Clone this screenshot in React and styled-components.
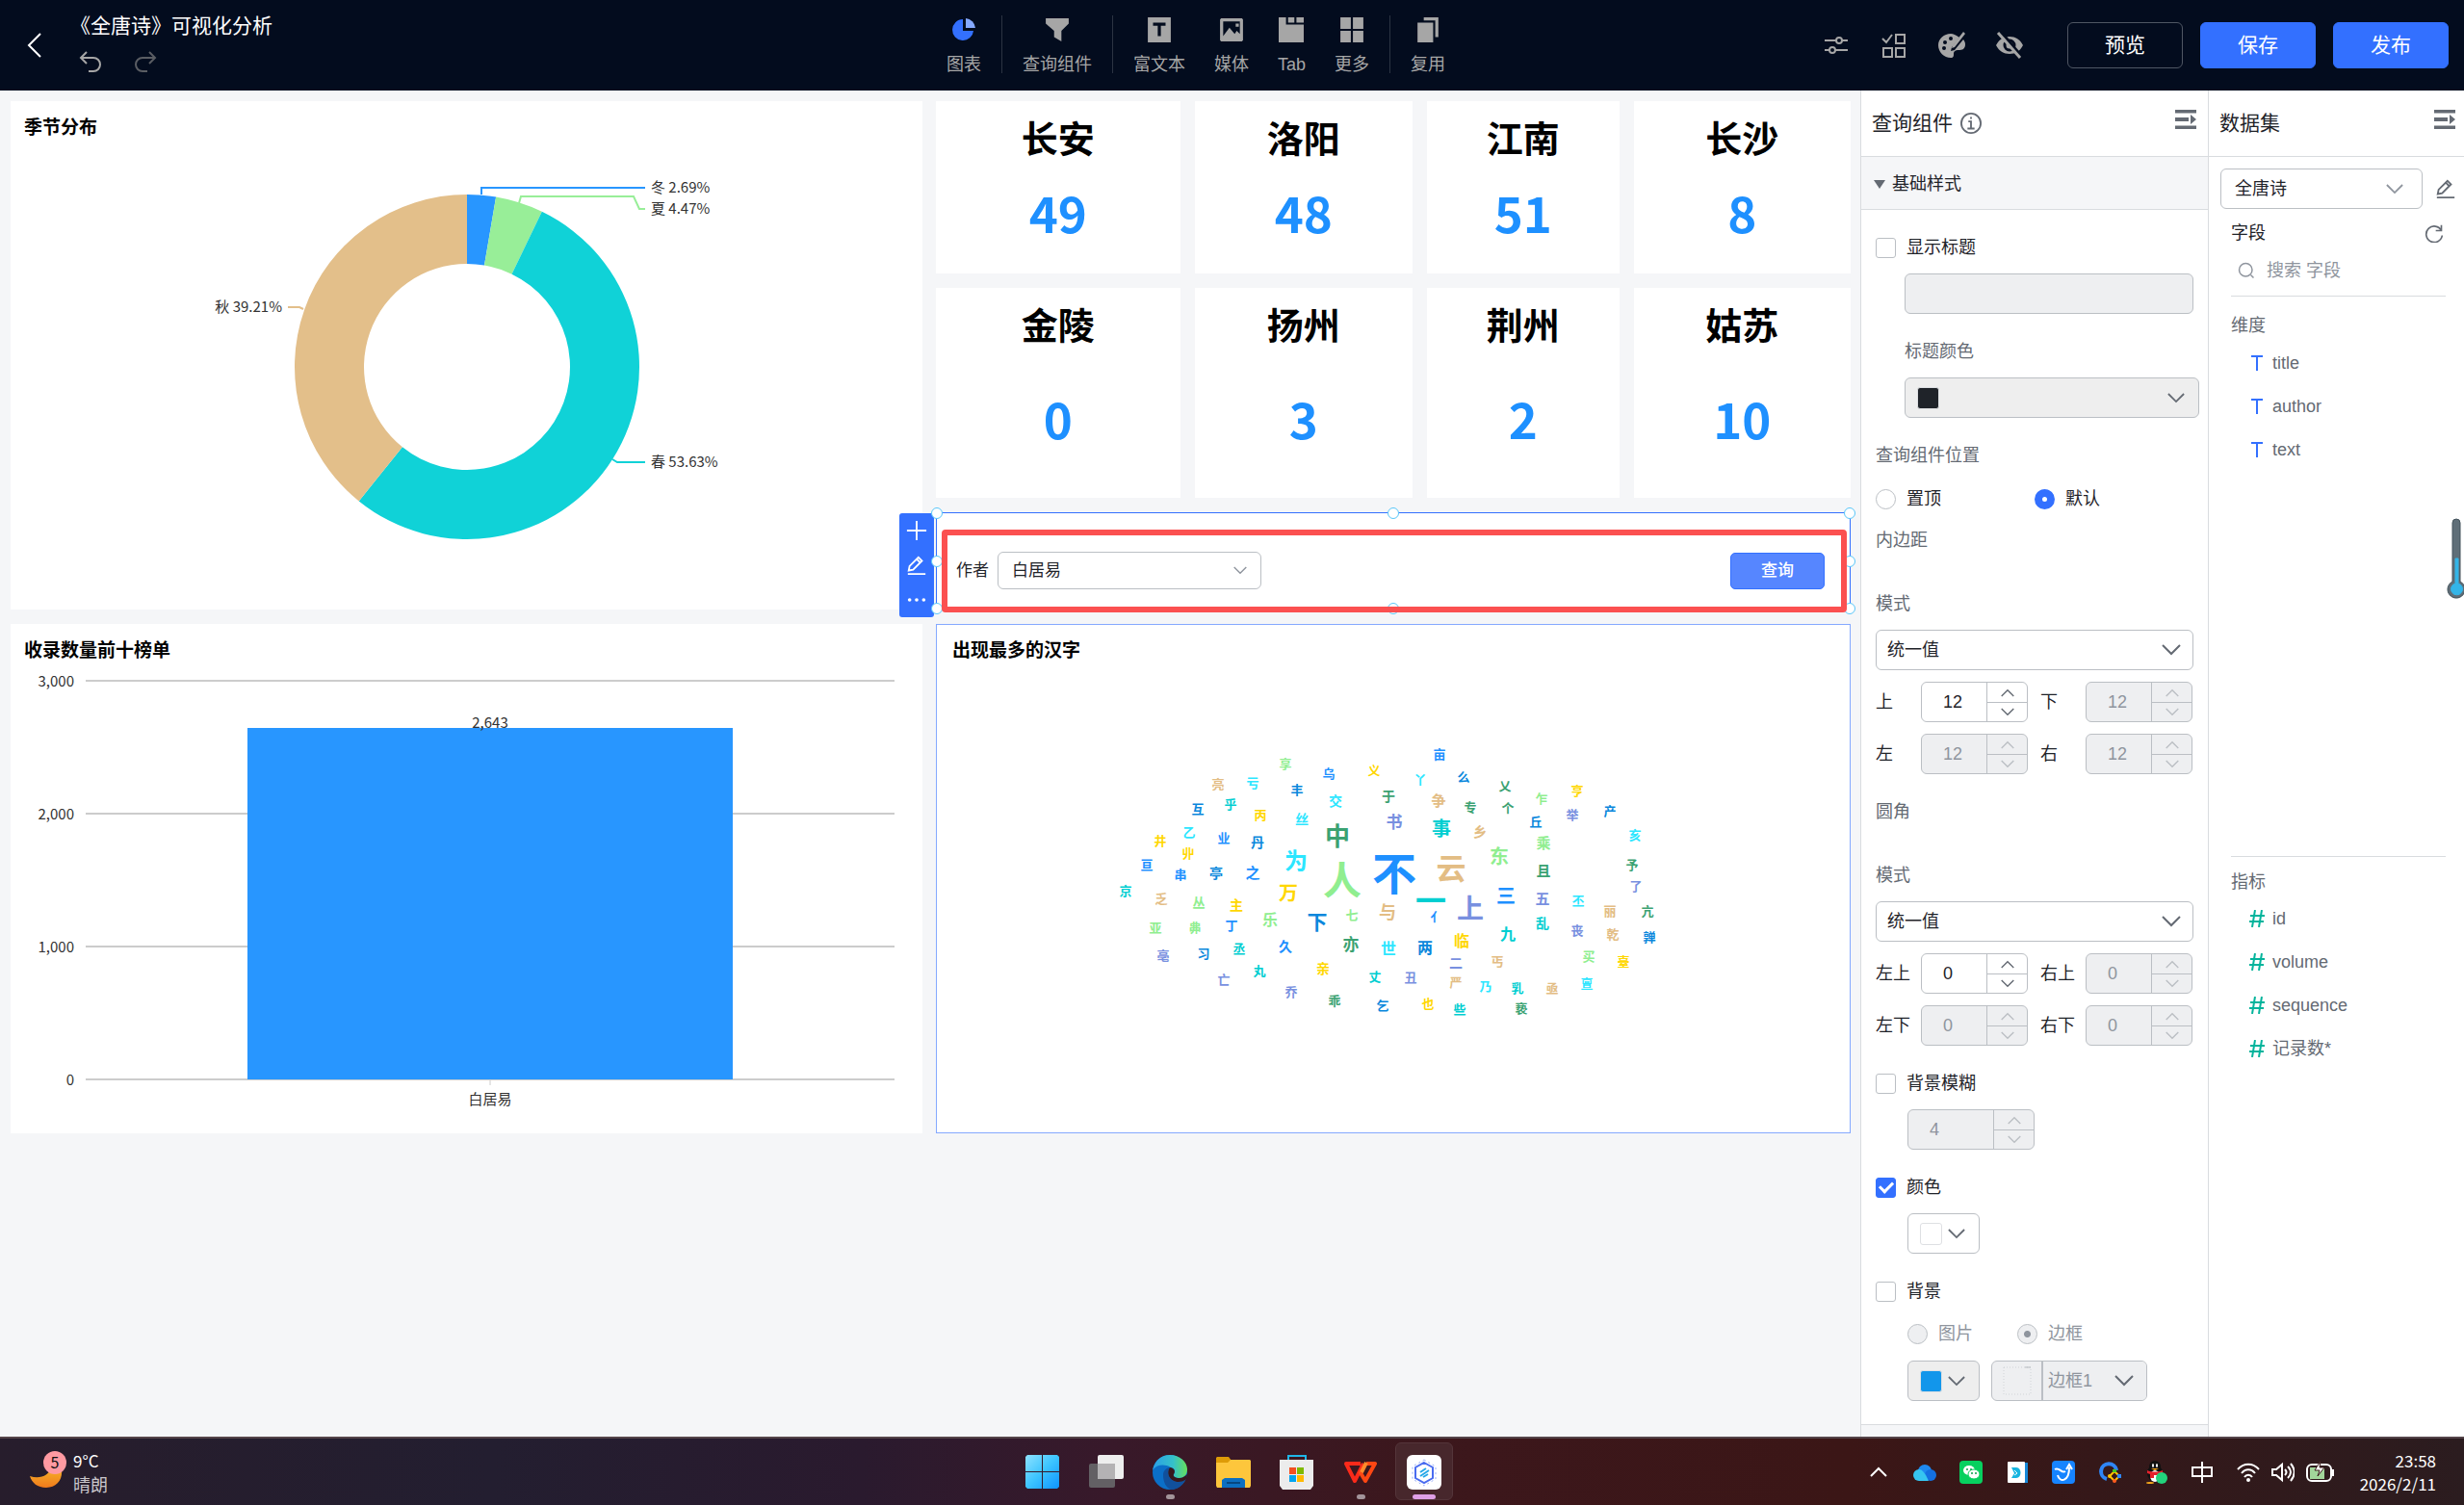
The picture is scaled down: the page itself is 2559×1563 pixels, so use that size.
import React from 'react';
import styled, { createGlobalStyle } from 'styled-components';

const uiFont = '"Liberation Sans", "Noto Sans CJK SC", sans-serif';
const chartFont = '"Noto Sans CJK SC", sans-serif';

const GlobalStyle = createGlobalStyle`
  * {
    box-sizing: border-box;
  }

  body {
    margin: 0;
    font-family: ${uiFont};
    font-size: 18px;
    line-height: 24px;
    color: #1f2329;
    background: #f5f6f8;
  }

  button, input, select {
    font: inherit;
    color: inherit;
    margin: 0;
    padding: 0;
  }

  svg {
    display: block;
    flex: none;
  }
`;

const Page = styled.div`
  display: flex;
  flex-direction: column;
  min-height: 100vh;
`;

/* ---------- top bar ---------- */

const TopBar = styled.header`
  display: grid;
  grid-template-columns: 982fr auto 1057fr;
  height: 94px;
  background: #030c1e;
  color: #a6a6a6;
`;

const TopLeft = styled.div`
  display: flex;
  align-items: center;
  padding-left: 26px;
`;

const PlainButton = styled.button`
  display: flex;
  align-items: center;
  justify-content: center;
  border: 0;
  background: none;
  color: ${props => props.$color || 'inherit'};
`;

const TitleBlock = styled.div`
  padding: 0 0 5px 27px;

  h1 {
    margin: 0;
    font-size: 21px;
    font-weight: 400;
    line-height: 30px;
    color: #fff;
  }
`;

const History = styled.div`
  display: flex;
  gap: 33px;
  padding: 11px 0 0 9px;
`;

const Tools = styled.nav`
  display: flex;
  align-items: center;
  padding-bottom: 2px;
`;

const ToolGroup = styled.div`
  display: flex;
  gap: 30px;

  & + & {
    margin-left: 21px;
    padding-left: 21px;
    border-left: 1px solid #2b3342;
  }
`;

const Tool = styled.button`
  display: flex;
  flex-direction: column;
  align-items: center;
  gap: 11px;
  height: 60px;
  padding-top: 2px;
  border: 0;
  background: none;
`;

const Actions = styled.div`
  display: flex;
  align-items: center;
  justify-content: flex-end;
  gap: 18px;
  padding-right: 16px;
`;

const ActionIcons = styled.div`
  display: flex;
  gap: 30px;
  margin-right: 27px;
`;

const ActionButton = styled.button`
  width: 120px;
  height: 48px;
  border: 1px solid ${props => (props.$primary ? '#3370ff' : '#4f5663')};
  border-radius: 6px;
  background: ${props => (props.$primary ? '#3370ff' : 'transparent')};
  color: #fff;
  font-size: 21px;
`;

/* ---------- canvas ---------- */

const Body = styled.div`
  display: flex;
  flex: 1;
`;

const Canvas = styled.main`
  flex: 1;
  display: grid;
  grid-template-columns: 947fr 950fr;
  grid-template-rows: 528px 529px;
  gap: 15px 14px;
  padding: 11px 10px 11px 11px;
  min-width: 0;
`;

const ChartCard = styled.section`
  display: flex;
  flex-direction: column;
  background: #fff;
  box-shadow: ${props => (props.$active ? 'inset 0 0 0 1px #85a9ff' : 'none')};

  h2 {
    margin: 0;
    padding-left: ${props => (props.$active ? 17 : 14)}px;
    font: 700 19px/52px ${chartFont};
    color: #000;
  }

  svg {
    width: 100%;
    flex: 1;
    overflow: visible;
    font-family: ${chartFont};
  }
`;

const Metrics = styled.div`
  display: grid;
  grid-template-columns: 253fr 226fr 199fr 225fr;
  grid-template-rows: 179px 218px 101px;
  gap: 15px;
`;

const MetricCard = styled.section`
  display: flex;
  flex-direction: column;
  align-items: center;
  background: #fff;
  font-family: ${chartFont};
  font-weight: 700;

  h2 {
    margin: 0;
    padding-top: 11px;
    font-size: 38px;
    line-height: 52px;
    color: #000;
  }

  p {
    display: flex;
    flex: 1;
    align-items: center;
    margin: 0;
    padding-bottom: 12px;
    font-size: 51px;
    color: #1e90ff;
  }
`;

const QueryBox = styled.section`
  position: relative;
  grid-column: 1 / -1;
  display: flex;
  align-items: center;
  justify-content: space-between;
  padding: 20px 26px 0 20px;
  border: 1px solid #3370ff;
  background: #fff;
  font-size: 17px;
`;

const QueryField = styled.label`
  display: flex;
  align-items: center;
  gap: 9px;
`;

const QueryButton = styled.button`
  width: 98px;
  height: 38px;
  border: 1px solid #3370ff;
  border-radius: 5px;
  background: #5686ff;
  color: #fff;
  font-weight: 500;
`;

const SideTools = styled.div`
  position: absolute;
  top: 0;
  left: -39px;
  display: flex;
  flex-direction: column;
  justify-content: space-around;
  align-items: center;
  width: 36px;
  height: 108px;
  border-radius: 3px;
  background: #3370ff;
  color: #fff;
`;

const Handle = styled.i`
  position: absolute;
  left: ${props => props.$x}%;
  top: ${props => props.$y}%;
  width: 12px;
  height: 12px;
  margin: -6px;
  border: 1px solid #59c7f9;
  border-radius: 50%;
  background: #fff;
`;

const RedFrame = styled.div`
  position: absolute;
  inset: 17px 3px -4px 5px;
  border: 6px solid #fb5050;
  border-radius: 4px;
  pointer-events: none;
`;

/* ---------- side panels ---------- */

const Panel = styled.aside`
  position: relative;
  display: flex;
  flex-direction: column;
  flex: none;
  width: ${props => props.$width}px;
  border-left: 1px solid #d9dcdf;
  background: #fff;
`;

const PanelHeader = styled.div`
  display: flex;
  align-items: center;
  gap: 8px;
  height: 69px;
  padding: 0 ${props => props.$right}px 0 11px;
  border-bottom: 1px solid #d9dcdf;
  color: #646a73;

  h2 {
    margin: 0;
    font-size: 21px;
    font-weight: 400;
    color: #1f2329;
  }

  button {
    margin: 0 0 8px auto;
  }
`;

const SectionTitle = styled.button`
  display: flex;
  align-items: center;
  gap: 7px;
  height: 55px;
  padding: 2px 0 0 13px;
  border: 0;
  border-bottom: 1px solid #d9dcdf;
  background: #f5f6f8;
`;

const Form = styled.form`
  display: flex;
  flex-direction: column;
  padding: 0 15px 24px;
  border-bottom: 1px solid #d9dcdf;
`;

const PanelRest = styled.div`
  flex: 1;
  background: #f5f6f8;
`;

const Caption = styled.div`
  margin: ${props => props.$top}px 0 15px ${props => (props.$indent ? 30 : 0)}px;
  color: #646a73;
`;

const Row = styled.div`
  display: flex;
  gap: 12px;
  margin-top: ${props => props.$top || 0}px;
  margin-left: ${props => props.$indent || 0}px;
`;

const Check = styled.label`
  display: flex;
  align-items: center;
  gap: 11px;
  margin: 27px 0 15px;
`;

const Choice = styled.label`
  display: flex;
  align-items: center;
  gap: 11px;
  width: ${props => props.$width}px;
  color: ${props => (props.$muted ? '#8f959e' : '#1f2329')};
`;

const CheckBox = styled.input.attrs({ type: 'checkbox' })`
  appearance: none;
  display: grid;
  place-content: center;
  width: 21px;
  height: 21px;
  border: 1px solid #bbbfc4;
  border-radius: 3px;
  background: #fff;

  &:checked {
    border-color: #3370ff;
    background: #3370ff;
  }

  &:checked::after {
    content: '';
    width: 11px;
    height: 6px;
    margin-bottom: 3px;
    border: solid #fff;
    border-width: 0 0 3px 3px;
    transform: rotate(-45deg);
  }
`;

const Radio = styled.input.attrs({ type: 'radio' })`
  appearance: none;
  width: 21px;
  height: 21px;
  border: 1px solid #bbbfc4;
  border-radius: 50%;
  background: #fff;

  &:checked {
    border: 8px solid #3370ff;
  }

  &:disabled {
    border: 1px solid #bbbfc4;
    background: #eeeff1;
  }

  &:disabled:checked {
    background: radial-gradient(circle, #8f959e 3px, #eeeff1 4px);
  }
`;

const TextBox = styled.input`
  height: 42px;
  margin-left: 30px;
  border: 1px solid #bbbfc4;
  border-radius: 6px;
  background: #eeeff1;
`;

/* the arrow shares the grid cell of the select */
const SelectBox = styled.div`
  display: grid;
  flex: ${props => (props.$width ? 'none' : 1)};
  width: ${props => (props.$width ? `${props.$width}px` : 'auto')};
  align-items: center;

  select, svg {
    grid-area: 1 / 1;
  }

  select {
    appearance: none;
    width: 100%;
    height: ${props => props.$height || 42}px;
    padding-left: ${props => props.$pad || 11}px;
    border: 1px solid #bbbfc4;
    border-radius: 6px;
    background: ${props => (props.$muted ? '#eeeff1' : '#fff')};
    color: ${props => (props.$muted ? '#8f959e' : '#1f2329')};
    opacity: 1;
  }

  svg {
    justify-self: end;
    margin-right: ${props => props.$arrowRight || 13}px;
    pointer-events: none;
    color: ${props => (props.$light ? '#8f959e' : '#646a73')};
  }
`;

const ColorButton = styled.button`
  display: flex;
  align-items: center;
  justify-content: space-between;
  height: 42px;
  width: ${props => (props.$wide ? 306 : 75)}px;
  margin: ${props => (props.$wide ? '0 -6px 0 30px' : '0')};
  padding: 0 14px 0 12px;
  border: 1px solid #bbbfc4;
  border-radius: 6px;
  background: ${props => (props.disabled ? '#eeeeee' : '#fff')};
  color: #646a73;
`;

const Swatch = styled.span`
  width: 23px;
  height: 23px;
  border: 1px solid #dee0e3;
  border-radius: 3px;
  background: ${props => props.$color};
`;

const NumberGrid = styled.div`
  display: grid;
  grid-template-columns: 34px 111px 34px 111px;
  gap: 12px 13px;
  align-items: center;
  margin-top: 12px;

  label {
    white-space: nowrap;
  }
`;

const NumberBox = styled.div`
  display: grid;
  grid-template-columns: 1fr 42px;
  grid-template-rows: 1fr 1fr;
  width: ${props => (props.$wide ? 132 : 111)}px;
  height: 42px;
  border: 1px solid #bbbfc4;
  border-radius: 6px;
  overflow: hidden;
  background: ${props => (props.$muted ? '#eeeff1' : '#fff')};
  color: ${props => (props.$muted ? '#8f959e' : '#1f2329')};

  input {
    grid-row: 1 / 3;
    width: 100%;
    min-width: 0;
    border: 0;
    background: none;
    padding-left: 22px;
    appearance: textfield;
    color: inherit;
  }

  input::-webkit-inner-spin-button {
    display: none;
  }

  button {
    border-left: 1px solid #bbbfc4;
    color: ${props => (props.$muted ? '#bbbfc4' : '#646a73')};
  }

  button + button {
    border-top: 1px solid #bbbfc4;
  }
`;

const BorderPick = styled.div`
  display: flex;
  width: 162px;
  height: 42px;
  border: 1px solid #bbbfc4;
  border-radius: 6px;
  background: #eeeff1;
  overflow: hidden;

  > span {
    display: grid;
    place-items: center;
    width: 53px;
    border-right: 2px solid #bbbfc4;
  }

  select {
    border: 0;
    border-radius: 0;
    height: 40px;
  }
`;

const DatasetRow = styled.div`
  display: flex;
  align-items: center;
  gap: 13px;
  padding: 12px 8px 13px 12px;
  color: #646a73;
`;

const Fields = styled.div`
  display: flex;
  flex-direction: column;
  flex: 1;
  padding: 0 19px 0 23px;
`;

const FieldsHead = styled.div`
  display: flex;
  justify-content: space-between;
  padding-right: 2px;
`;

const Search = styled.label`
  display: flex;
  align-items: center;
  gap: 12px;
  height: 54px;
  padding-left: 7px;
  border-bottom: 1px solid #d9dcdf;
  color: #8f959e;

  input {
    width: 100%;
    min-width: 0;
    border: 0;
    outline: 0;
  }

  input::placeholder {
    color: #8f959e;
  }
`;

const FieldSection = styled.section`
  flex: ${props => props.$grow} 1 0;
  padding-top: ${props => (props.$line ? 14 : 18)}px;
  border-top: ${props => (props.$line ? '1px solid #d9dcdf' : '0')};
  color: #646a73;

  h3 {
    margin: 0;
    font-size: 18px;
    font-weight: 400;
  }

  ul {
    margin: 4px 0 0;
    padding: 0 0 0 19px;
    list-style: none;
  }

  li {
    display: flex;
    align-items: center;
    gap: 8px;
    height: 45px;
  }
`;

const Thermometer = styled.svg`
  position: absolute;
  right: -2px;
  top: 444px;
`;

/* ---------- taskbar ---------- */

const TaskBar = styled.footer`
  display: grid;
  grid-template-columns: 1fr auto 1fr;
  height: 71px;
  border-top: 2px solid #544449;
  background: linear-gradient(90deg, #271d2c 0, #231e30 20%, #2a1a2e 35%, #38192a 45%, #3c171c 58%, #3b1616 75%, #351819 85%, #2b1c1f 100%);
  color: #fff;
  font: 17px/24px ${chartFont};
`;

const Weather = styled.div`
  display: flex;
  align-items: center;
  gap: 6px;
  padding-left: 28px;

  small {
    display: block;
    font-size: 18px;
    color: #c9c6cb;
  }
`;

const Apps = styled.div`
  display: flex;
  gap: 6px;
  padding: 4px 0 5px 3px;
`;

const AppButton = styled.button`
  display: flex;
  flex-direction: column;
  align-items: center;
  justify-content: space-between;
  width: 60px;
  height: 60px;
  padding: 12px 0 0;
  border: 1px solid ${props => (props.$active ? '#54353a' : 'transparent')};
  border-radius: 6px;
  background: ${props => (props.$active ? '#47272c' : 'none')};

  &::after {
    content: '';
    width: ${props => (props.$active ? 24 : 9)}px;
    height: 5px;
    border-radius: 3px;
    background: ${props => (props.$active ? '#df9fe6' : props.$open ? '#a3949a' : 'transparent')};
  }
`;

const Tray = styled.div`
  display: flex;
  align-items: center;
  justify-content: flex-end;
  gap: 24px;
  padding-right: 29px;
`;

const TraySystem = styled.div`
  display: flex;
  align-items: center;
  gap: 12px;
`;

const Clock = styled.time`
  width: 81px;
  text-align: right;
  white-space: nowrap;
`;

/* ---------- icons ---------- */

const Icon = ({ size = 24, h, box = '0 0 24 24', children, fill = 'none', w = 2 }) => (
  <svg width={size} height={h || size} viewBox={box} fill={fill} stroke={fill === 'none' ? 'currentColor' : 'none'} strokeWidth={w} aria-hidden="true">
    {children}
  </svg>
);

const Arrow = ({ size = 20, up }) => (
  <svg width={size} height={size / 2 + 2} viewBox="0 0 20 12" fill="none" stroke="currentColor" strokeWidth="2" aria-hidden="true">
    <path d={up ? 'M1 11l9-9 9 9' : 'M1 1l9 9 9-9'} />
  </svg>
);

const PenIcon = ({ size = 22 }) => (
  <Icon size={size}>
    <path d="M3 18l1-5L14 3l4 4L8 17zM12 5l4 4M2 22h20" />
  </Icon>
);

const FoldIcon = () => (
  <Icon fill="currentColor">
    <path d="M1 2h22v3.500H1zM1 10h14v4H1zM17 7l6 5-6 5zM1 18.500h22V22H1z" />
  </Icon>
);

const toolGroups = [
  [
    { label: '图表', icon: <svg width="26" height="26" viewBox="0 0 26 26"><path d="M12 2a11 11 0 1 0 11 12H12z" fill="#3370ff" /><path d="M15 1v10h10A11 11 0 0 0 15 1z" fill="#85a9ff" /></svg> }
  ],
  [
    { label: '查询组件', icon: <Icon size={26} fill="currentColor"><path d="M1 1h22v5l-7 7v10l-7-4v-6L1 6z" /></Icon> }
  ],
  [
    { label: '富文本', icon: <Icon size={26} fill="currentColor"><path fillRule="evenodd" d="M1 0h22v24H1zM6 5v3h4.500v10h3V8H18V5z" /></Icon> },
    { label: '媒体', icon: <Icon size={26} fill="currentColor"><path fillRule="evenodd" d="M2 1h20l1 1v20l-1 1H2l-1-1V2zM4 4v14l6-8 5 6 2-3 3 3V4zM16 6h3v3h-3z" /></Icon> },
    { label: 'Tab', icon: <Icon size={26} fill="currentColor"><path d="M0 0h7v7h17v17H0zM9 0h6v5H9zM17 0h7v5h-7z" /></Icon> },
    { label: '更多', icon: <Icon size={26} fill="currentColor"><path d="M1 0h10v11H1zM13 0h10v11H13zM1 13h10v11H1zM13 13h10v11H13z" /></Icon> }
  ],
  [
    { label: '复用', icon: <Icon size={26} fill="currentColor"><path d="M2 5h15v19H2zM8 0h14v19h-3V3H8z" /></Icon> }
  ]
];

/* ---------- charts ---------- */

const seasons = [
  { name: '冬', value: 2.69, color: '#2896ff', line: '489,45 489,38 659,38', x: 665, y: 38 },
  { name: '夏', value: 4.47, color: '#98ee98', line: '528,54 530,47 647,47 653,60 659,60', x: 665, y: 60 },
  { name: '春', value: 53.63, color: '#10d2d7', line: '625,320 630,323 659,323', x: 665, y: 323 },
  { name: '秋', value: 39.21, color: '#e3bf8a', line: '304,164 300,162 288,162', x: 282, y: 162, end: true }
];

const slice = (from, to) => {
  const at = (r, share) => {
    const a = (share / 100) * 2 * Math.PI;
    return `${474 + r * Math.sin(a)} ${224 - r * Math.cos(a)}`;
  };
  const big = to - from > 50 ? 1 : 0;
  return `M${at(179, from)}A179 179 0 ${big} 1 ${at(179, to)}L${at(107, to)}A107 107 0 ${big} 0 ${at(107, from)}Z`;
};

const SeasonChart = () => {
  let total = 0;
  return (
    <svg viewBox="0 0 947 476" fontSize="15" fill="#333">
      {seasons.map(s => {
        const from = total;
        total += s.value;
        return (
          <g key={s.name}>
            <path d={slice(from, total)} fill={s.color} />
            <polyline points={s.line} fill="none" stroke={s.color} strokeWidth="2" />
            <text x={s.x} y={s.y + 5} textAnchor={s.end ? 'end' : 'start'}>{`${s.name} ${s.value}%`}</text>
          </g>
        );
      })}
    </svg>
  );
};

const RankChart = () => (
  <svg viewBox="0 0 947 477" fontSize="15" fill="#333">
    {['3,000', '2,000', '1,000', '0'].map((tick, i) => (
      <g key={tick}>
        <path d={`M78 ${7 + i * 138}h840`} stroke="#ccc" strokeWidth="2" />
        <text x="66" y={13 + i * 138} textAnchor="end">{tick}</text>
      </g>
    ))}
    <rect x="246" y="56" width="504" height="365" fill="#2896ff" />
    <path d="M498 421v6" stroke="#ccc" />
    <text x="498" y="56" textAnchor="middle">2,643</text>
    <text x="498" y="447" textAnchor="middle">白居易</text>
  </svg>
);

const hues = {
  b: '#1e90ff', d: '#0a87dc', c: '#2ce6ff', t: '#00ced1', g: '#3ba272',
  l: '#90ee90', y: '#ffd700', n: '#e3bd84', p: '#7890e0'
};

// word, centre x, centre y, hue, size
const words = [
  ['不', 461, 217, 'b', 46], ['人', 407, 224, 'l', 40], ['一', 499, 245, 't', 32], ['云', 520, 211, 'n', 31],
  ['上', 540, 253, 'p', 28], ['中', 402, 178, 'g', 26], ['为', 359, 204, 'c', 24], ['下', 381, 267, 'd', 21],
  ['事', 510, 170, 't', 20], ['东', 570, 199, 'l', 20], ['三', 577, 240, 'b', 20], ['万', 351, 237, 'y', 20],
  ['与', 454, 257, 'n', 18], ['书', 461, 164, 'p', 17], ['亦', 416, 291, 'g', 17], ['乐', 332, 265, 'l', 16],
  ['九', 579, 280, 't', 16], ['世', 455, 295, 'c', 16], ['两', 493, 294, 'd', 16], ['临', 531, 287, 'y', 16],
  ['之', 314, 216, 'b', 15], ['争', 507, 141, 'n', 15], ['五', 615, 243, 'p', 15], ['且', 616, 214, 'g', 15],
  ['乘', 616, 185, 'l', 15], ['于', 455, 137, 'g', 14], ['交', 400, 142, 'c', 14], ['丝', 365, 161, 'c', 14],
  ['乡', 550, 174, 'n', 14], ['丹', 319, 185, 'd', 14], ['亭', 276, 217, 'd', 14], ['主', 297, 250, 'y', 14],
  ['久', 348, 293, 'b', 14], ['亲', 387, 316, 'y', 14], ['二', 525, 310, 'p', 14], ['乱', 615, 269, 't', 14],
  ['享', 348, 103, 'l'], ['乌', 393, 113, 'b'], ['义', 440, 110, 'y'], ['亮', 278, 124, 'n'],
  ['亏', 314, 123, 'c'], ['丰', 360, 130, 'd'], ['互', 257, 150, 'd'], ['乎', 291, 145, 't'],
  ['丙', 322, 156, 'y'], ['乙', 248, 174, 'c'], ['井', 218, 183, 'y'], ['业', 284, 180, 'b'],
  ['丱', 247, 196, 'y'], ['亘', 204, 208, 'b'], ['串', 239, 218, 'b'], ['京', 182, 235, 't'],
  ['乏', 219, 243, 'n'], ['丛', 258, 247, 'l'], ['亚', 213, 273, 'l'], ['丳', 254, 273, 'l'],
  ['丁', 292, 271, 'b'], ['七', 417, 260, 'l'], ['亳', 221, 302, 'p'], ['习', 263, 300, 'd'],
  ['丞', 300, 295, 't'], ['亡', 284, 327, 'p'], ['丸', 321, 318, 't'], ['乔', 354, 340, 'p'],
  ['乖', 399, 349, 'g'], ['亩', 508, 93, 'b'], ['丫', 488, 119, 'c'], ['么', 533, 117, 'd'],
  ['乂', 576, 126, 'g'], ['专', 540, 148, 'g'], ['个', 579, 149, 'g'], ['乍', 614, 139, 'l'],
  ['亨', 651, 131, 'y'], ['丘', 608, 163, 'd'], ['举', 646, 156, 'p'], ['产', 685, 152, 'd'],
  ['亥', 711, 177, 'c'], ['予', 708, 208, 'g'], ['了', 712, 230, 'p'], ['亻', 505, 262, 'b'],
  ['丕', 652, 245, 'c'], ['丽', 685, 256, 'n'], ['亢', 724, 256, 'g'], ['丧', 651, 276, 'p'],
  ['乾', 688, 280, 'n'], ['亸', 726, 283, 'd'], ['丐', 568, 308, 'n'], ['买', 663, 303, 'l'],
  ['臺', 699, 308, 'y'], ['丈', 441, 324, 't'], ['丑', 478, 325, 'p'], ['严', 525, 330, 'n'],
  ['乃', 556, 334, 'c'], ['乳', 589, 336, 't'], ['亟', 625, 336, 'n'], ['亶', 661, 331, 'c'],
  ['乞', 449, 354, 'd'], ['也', 496, 352, 'y'], ['些', 529, 358, 't'], ['亵', 593, 357, 'g']
];

const WordCloud = () => (
  <svg viewBox="-15 10 950 477" fontWeight="700" textAnchor="middle">
    {words.map(([word, x, y, hue, size = 13]) => (
      <text key={word} x={x} y={y + Math.round(size * 0.38)} fontSize={size} fill={hues[hue]}>{word}</text>
    ))}
  </svg>
);

const metrics = [
  ['长安', 49], ['洛阳', 48], ['江南', 51], ['长沙', 8],
  ['金陵', 0], ['扬州', 3], ['荆州', 2], ['姑苏', 10]
];

const handles = [[0, 0], [50, 0], [100, 0], [0, 50], [100, 50], [0, 100], [50, 100], [100, 100]];

/* ---------- parts ---------- */

const Header = () => (
  <TopBar>
    <TopLeft>
      <PlainButton $color="#fff" aria-label="返回">
        <Icon size={20} h={26} box="0 0 20 26"><path d="M16 1L4 13l12 12" /></Icon>
      </PlainButton>
      <TitleBlock>
        <h1>《全唐诗》可视化分析</h1>
        <History>
          <PlainButton aria-label="撤销"><Icon><path d="M8 1L2 7l6 6M2 7h13a7 7 0 0 1 0 14h-5" /></Icon></PlainButton>
          <PlainButton $color="#5a5d63" aria-label="重做"><Icon><path d="M16 1l6 6-6 6M22 7H9a7 7 0 0 0 0 14h5" /></Icon></PlainButton>
        </History>
      </TitleBlock>
    </TopLeft>
    <Tools>
      {toolGroups.map(group => (
        <ToolGroup key={group[0].label}>
          {group.map(tool => (
            <Tool key={tool.label}>{tool.icon}{tool.label}</Tool>
          ))}
        </ToolGroup>
      ))}
    </Tools>
    <Actions>
      <ActionIcons>
        <PlainButton aria-label="参数">
          <Icon size={30} box="0 0 30 30"><path d="M3 10h12M21 10h6M3 20h5M14 20h13" /><circle cx="18" cy="10" r="3" /><circle cx="11" cy="20" r="3" /></Icon>
        </PlainButton>
        <PlainButton aria-label="批量">
          <Icon size={30} box="0 0 30 30"><path d="M3 8l4 4 6-8M17 4h9v9h-9zM4 18h9v9H4zM17 18h9v9h-9z" /></Icon>
        </PlainButton>
        <PlainButton aria-label="外观">
          <Icon size={30} box="0 0 30 30" fill="currentColor">
            <path d="M14 3C7 3 1 8 1 15s6 13 13 13c3 0 3-2 3-4 0-3 2-4 5-4 4 0 7-1 7-6 0-2-1-4-2-5l-9 11-4 1 1-4 8-10c-3-2-6-4-9-4z" />
            <path d="M27 1l2 2-11 14-3 1 1-3z" />
            <g fill="#030c1e"><circle cx="7" cy="18" r="2" /><circle cx="8" cy="12" r="2" /><circle cx="14" cy="8" r="2" /></g>
          </Icon>
        </PlainButton>
        <PlainButton aria-label="隐藏">
          <Icon size={30} box="0 0 30 30">
            <path d="M1 15c3-6 8-9 14-9s11 3 14 9c-3 6-8 9-14 9S4 21 1 15z" fill="currentColor" stroke="none" />
            <circle cx="15" cy="15" r="5" stroke="#030c1e" strokeWidth="3" />
            <path d="M6 1l22 26" stroke="#030c1e" strokeWidth="3" />
            <path d="M3 2l23 26" strokeWidth="3" />
          </Icon>
        </PlainButton>
      </ActionIcons>
      <ActionButton>预览</ActionButton>
      <ActionButton $primary>保存</ActionButton>
      <ActionButton $primary>发布</ActionButton>
    </Actions>
  </TopBar>
);

const Query = () => (
  <QueryBox>
    <QueryField>
      作者
      <SelectBox $width={274} $height={39} $pad={14} $arrowRight={15} $light>
        <select defaultValue="白居易"><option>白居易</option></select>
        <Arrow size={14} />
      </SelectBox>
    </QueryField>
    <QueryButton>查询</QueryButton>
    <SideTools>
      <PlainButton aria-label="添加"><Icon size={22}><path d="M12 1v22M1 12h22" /></Icon></PlainButton>
      <PlainButton aria-label="编辑"><PenIcon /></PlainButton>
      <PlainButton aria-label="更多操作"><Icon size={22} fill="currentColor"><circle cx="4" cy="12" r="2" /><circle cx="12" cy="12" r="2" /><circle cx="20" cy="12" r="2" /></Icon></PlainButton>
    </SideTools>
    {handles.map(([x, y]) => <Handle key={`${x}-${y}`} $x={x} $y={y} />)}
    <RedFrame />
  </QueryBox>
);

const NumberInput = ({ id, value, muted, wide, label }) => (
  <NumberBox $muted={muted} $wide={wide}>
    <input id={id} type="number" defaultValue={value} disabled={muted} aria-label={label} />
    <PlainButton type="button" disabled={muted} aria-label="增加"><Arrow size={14} up /></PlainButton>
    <PlainButton type="button" disabled={muted} aria-label="减少"><Arrow size={14} /></PlainButton>
  </NumberBox>
);

const Corners = ({ names, value }) => (
  <NumberGrid>
    {names.map((name, i) => (
      <React.Fragment key={name}>
        <label htmlFor={`side-${name}`}>{name}</label>
        <NumberInput id={`side-${name}`} value={value} muted={i > 0} />
      </React.Fragment>
    ))}
  </NumberGrid>
);

const ModeSelect = ({ id }) => (
  <SelectBox>
    <select id={id} defaultValue="统一值"><option>统一值</option></select>
    <Arrow />
  </SelectBox>
);

const StylePanel = () => (
  <Panel $width={361}>
    <PanelHeader $right={11}>
      <h2>查询组件</h2>
      <Icon size={22}><circle cx="12" cy="12" r="11" /><path d="M9 10h3v8M8 18h8M11 6h2" /></Icon>
      <PlainButton aria-label="收起"><FoldIcon /></PlainButton>
    </PanelHeader>
    <SectionTitle>
      <Icon size={12} h={9} box="0 0 12 9" fill="#646a73"><path d="M0 0h12L6 9z" /></Icon>
      基础样式
    </SectionTitle>
    <Form>
      <Check><CheckBox />显示标题</Check>
      <TextBox disabled aria-label="标题" />
      <Caption $top={27} $indent>标题颜色</Caption>
      <ColorButton type="button" $wide disabled aria-label="标题颜色"><Swatch $color="#1f2329" /><Arrow size={18} /></ColorButton>
      <Caption $top={27}>查询组件位置</Caption>
      <Row $top={6}>
        <Choice $width={153}><Radio name="place" />置顶</Choice>
        <Choice><Radio name="place" defaultChecked />默认</Choice>
      </Row>
      <Caption $top={19}>内边距</Caption>
      <Caption as="label" htmlFor="padding-mode" $top={27}>模式</Caption>
      <ModeSelect id="padding-mode" />
      <Corners names={['上', '下', '左', '右']} value={12} />
      <Caption $top={27}>圆角</Caption>
      <Caption as="label" htmlFor="radius-mode" $top={27}>模式</Caption>
      <ModeSelect id="radius-mode" />
      <Corners names={['左上', '右上', '左下', '右下']} value={0} />
      <Check><CheckBox />背景模糊</Check>
      <Row $indent={33}><NumberInput value={4} muted wide label="背景模糊" /></Row>
      <Check><CheckBox defaultChecked />颜色</Check>
      <Row $indent={33}><ColorButton type="button" aria-label="颜色"><Swatch $color="#fff" /><Arrow size={18} /></ColorButton></Row>
      <Check><CheckBox />背景</Check>
      <Row $top={5} $indent={33}>
        <Choice $width={102} $muted><Radio name="back" disabled />图片</Choice>
        <Choice $muted><Radio name="back" disabled defaultChecked />边框</Choice>
      </Row>
      <Row $top={16} $indent={33}>
        <ColorButton type="button" disabled aria-label="边框颜色"><Swatch $color="#1296eb" /><Arrow size={18} /></ColorButton>
        <BorderPick>
          <span><svg width="30" height="30" fill="none" stroke="#b5babf"><path d="M1 1h28v28H1z" strokeDasharray="1 2" strokeOpacity=".5" /><path d="M23 1h6" /></svg></span>
          <SelectBox $muted $pad={5}>
            <select disabled defaultValue="边框1" aria-label="边框"><option>边框1</option></select>
            <Arrow />
          </SelectBox>
        </BorderPick>
      </Row>
    </Form>
    <PanelRest />
  </Panel>
);

const TextIcon = () => <Icon size={16} h={17} box="0 0 16 17"><g stroke="#3370ff"><path d="M2 2h12M8 2v15" /></g></Icon>;
const HashIcon = () => <Icon size={16} h={18} box="0 0 16 18"><g stroke="#04b49c"><path d="M1 6h15M0 12h15M6 0L3 18M13 0l-3 18" /></g></Icon>;

const DataPanel = () => (
  <Panel $width={266}>
    <PanelHeader $right={8}>
      <h2>数据集</h2>
      <PlainButton aria-label="收起"><FoldIcon /></PlainButton>
    </PanelHeader>
    <DatasetRow>
      <SelectBox $pad={14} $arrowRight={20} $light>
        <select defaultValue="全唐诗" aria-label="数据集"><option>全唐诗</option></select>
        <Arrow size={18} />
      </SelectBox>
      <PlainButton aria-label="编辑数据集"><PenIcon /></PlainButton>
    </DatasetRow>
    <Fields>
      <FieldsHead>
        字段
        <PlainButton $color="#646a73" aria-label="刷新"><Icon size={20}><path d="M21 2v7h-7M21 9a10 10 0 1 0 1 6" /></Icon></PlainButton>
      </FieldsHead>
      <Search>
        <Icon size={18}><circle cx="11" cy="11" r="9" /><path d="M18 18l4 4" /></Icon>
        <input placeholder="搜索 字段" />
      </Search>
      <FieldSection $grow={22}>
        <h3>维度</h3>
        <ul>
          {['title', 'author', 'text'].map(name => <li key={name}><TextIcon />{name}</li>)}
        </ul>
      </FieldSection>
      <FieldSection $grow={23} $line>
        <h3>指标</h3>
        <ul>
          {['id', 'volume', 'sequence', '记录数*'].map(name => <li key={name}><HashIcon />{name}</li>)}
        </ul>
      </FieldSection>
    </Fields>
    <Thermometer width="20" height="84" viewBox="0 0 20 84">
      <path d="M6 5a4 4 0 0 1 8 0v61a9 9 0 1 1-8 0z" fill="#5f6e78" stroke="#44535c" />
      <path d="M9 42h3v26a6 6 0 1 1-3 0z" fill="#33b5e8" stroke="#33b5e8" />
    </Thermometer>
  </Panel>
);

const apps = [
  {
    name: '开始',
    icon: <svg width="36" height="36" viewBox="0 0 36 36"><defs><linearGradient id="win" x1="0" y1="0" x2="1" y2="1"><stop stopColor="#8ee2ff" /><stop offset=".5" stopColor="#3cc4ff" /><stop offset="1" stopColor="#0e93ff" /></linearGradient></defs><path d="M2 0h15v17H0V2zM18 0h15l2 2v15H18zM0 18h17v17H2l-2-2zM18 18h17v15l-2 2H18z" fill="url(#win)" /></svg>
  },
  {
    name: '任务视图',
    icon: <svg width="36" height="36" viewBox="0 0 36 36"><rect y="9" width="27" height="25" rx="2" fill="#636064" /><rect x="9" width="27" height="25" rx="2" fill="#eee" /><path d="M9 9h18v16H9z" fill="#b4b2b4" /></svg>
  },
  {
    name: 'Edge',
    open: true,
    icon: <svg width="36" height="36" viewBox="0 0 36 36"><defs><linearGradient id="edge"><stop stopColor="#2a9fe8" /><stop offset=".6" stopColor="#35c1c9" /><stop offset="1" stopColor="#66e05a" /></linearGradient></defs><circle cx="18" cy="18" r="18" fill="#0b6fc8" /><path d="M0 16C2 6 9 0 18 0c10 0 18 7 18 15 0 6-4 9-8 9-5 0-7-2-6-4 2-3 1-6-3-7C12 9 4 10 0 16z" fill="url(#edge)" /><path d="M11 21c0-4 2-7 7-8-4 4-2 15 9 15 3 0 5-1 7-2-3 6-8 10-15 10-5-2-8-8-8-15z" fill="#11509c" /><path d="M18 13c5 1 6 4 4 7-1 2 1 4 6 4 3 0 6-2 8-4 0 3-1 5-2 6-2 1-4 2-7 2-10 0-13-10-9-15z" fill="#38191e" /></svg>
  },
  {
    name: '文件资源管理器',
    icon: <svg width="36" height="36" viewBox="0 0 36 36"><path d="M0 3l1-1h12l3 4h19v10H0z" fill="#dd9b07" /><path d="M0 8h12l3-3h20l1 1v26l-1 2H1l-1-2z" fill="#fdc63c" /><path d="M6 34v-8l3-2h18l3 2v8z" fill="#0c6fc0" /><path d="M11 29h14" stroke="#06477f" strokeWidth="2" /></svg>
  },
  {
    name: 'Microsoft Store',
    icon: <svg width="36" height="36" viewBox="0 0 36 36"><path d="M9 6V1h18v5" fill="none" stroke="#1fb6e8" strokeWidth="2" /><path d="M0 5h35v27l-3 4H3l-3-4z" fill="#ececec" /><path d="M10 13h7v7h-7z" fill="#f25022" /><path d="M18 13h7v7h-7z" fill="#7fba00" /><path d="M10 21h7v7h-7z" fill="#00a4ef" /><path d="M18 21h7v7h-7z" fill="#ffb900" /></svg>
  },
  {
    name: 'WPS',
    open: true,
    icon: <svg width="36" height="36" viewBox="0 0 36 36" fill="none" strokeWidth="4" strokeLinejoin="round"><path d="M18 9H3l9 18 9-18" stroke="#fb2a1a" /><path d="M17 17l6 10L33 9h-9" stroke="#ff4713" /><path d="M24 8l-5 10" stroke="#ff8a2b" /></svg>
  },
  {
    name: '数据分析',
    active: true,
    icon: <svg width="36" height="36" viewBox="0 0 36 36" fill="none"><rect width="36" height="36" rx="6" fill="#fff" /><path d="M18 8l9 5v11l-9 5-9-5V13z" stroke="#4a6cf0" strokeWidth="2" /><path d="M18 5l12 7v13l-12 7-12-7V12z" stroke="#9bb0f8" strokeDasharray="2 3" /><path d="M14 18l6-4M14 22l9-6M17 23l5-3" stroke="#27a8e8" strokeWidth="2" /></svg>
  }
];

const TrayIcons = () => (
  <>
    <Icon size={24}><path d="M4 16l8-8 8 8" /></Icon>
    <svg width="24" height="24" viewBox="0 0 24 24"><path d="M5 11a7 7 0 0 1 14 0l-7 8z" fill="#1e88f0" /><circle cx="18" cy="15" r="6" fill="#1470e0" /><path d="M6 9c3 0 6 3 10 12H6A6 6 0 0 1 6 9z" fill="#36c5f0" /></svg>
    <svg width="24" height="24" viewBox="0 0 24 24"><rect width="24" height="24" rx="4" fill="#07d05f" /><ellipse cx="10" cy="10" rx="6" ry="5" fill="#fff" /><ellipse cx="15" cy="14" rx="6" ry="5" fill="#fff" stroke="#07d05f" /><g fill="#07a04a"><circle cx="8" cy="9" r="1" /><circle cx="12" cy="9" r="1" /><circle cx="13" cy="13" r="1" /><circle cx="17" cy="13" r="1" /></g></svg>
    <svg width="24" height="24" viewBox="0 0 24 24"><rect x="4" y="2" width="19" height="21" fill="#1688d8" /><rect x="2" y="1" width="18" height="22" rx="1" fill="#fff" /><path d="M6 7h5c6 0 6 11 0 11H6l3-5z" fill="#17b5e0" /><path d="M9 10l3 3-3 2" stroke="#fff" fill="none" /></svg>
    <svg width="24" height="24" viewBox="0 0 24 24" fill="none" stroke="#fff" strokeWidth="2"><rect width="24" height="24" rx="4" fill="#1684ff" stroke="none" /><path d="M3 9c5-3 7 5 11 2M6 15c2 8 12 7 12-8M15 9l3-5 3 5" /></svg>
    <svg width="24" height="24" viewBox="0 0 24 24" fill="none"><path d="M9 19a8 8 0 1 1 10-9" stroke="#2f86f6" strokeWidth="4" /><path d="M17 11l5 5-5 5-5-5z" stroke="#ffc400" strokeWidth="2" /><path d="M15 9h4v3h-4z" fill="#44c520" /><path d="M20 14h4v4h-4z" fill="#2f86f6" /><circle cx="17" cy="21" r="2" fill="#ff5a1f" /><circle cx="12" cy="16" r="2" fill="#ffc400" /></svg>
    <svg width="24" height="24" viewBox="0 0 24 24"><ellipse cx="11" cy="13" rx="8" ry="9" fill="#111" /><circle cx="11" cy="6" r="6" fill="#111" /><ellipse cx="11" cy="16" rx="5" ry="6" fill="#fff" /><ellipse cx="9" cy="5" rx="1" ry="2" fill="#fff" /><ellipse cx="13" cy="5" rx="1" ry="2" fill="#fff" /><path d="M7 8h8l-4 2z" fill="#f7a81b" /><path d="M3 10c5 2 11 2 16 0v4c-3 1-6 1-9 1v3H6v-4l-3-1z" fill="#e5212b" /><ellipse cx="6" cy="23" rx="4" ry="1" fill="#f7a81b" /><circle cx="18" cy="18" r="6" fill="#22d37c" /></svg>
    <Icon size={24}><path d="M12 1v22M2 7h20v9H2z" /></Icon>
  </>
);

const Footer = () => (
  <TaskBar>
    <Weather>
      <svg width="42" height="50" viewBox="0 0 42 50">
        <defs><linearGradient id="moon" x1="0" y1="0" x2="0" y2="1"><stop stopColor="#f6c22c" /><stop offset="1" stopColor="#f07a1c" /></linearGradient></defs>
        <path d="M34 15c6 14-1 26-14 26-9 0-15-5-17-12 12 4 22-2 23-12z" fill="url(#moon)" />
        <circle cx="29" cy="15" r="12" fill="#ff9aa2" />
        <text x="29" y="21" fontSize="16" textAnchor="middle" fill="#111">5</text>
      </svg>
      <div>9°C<small>晴朗</small></div>
    </Weather>
    <Apps>
      {apps.map(app => (
        <AppButton key={app.name} aria-label={app.name} $open={app.open} $active={app.active}>{app.icon}</AppButton>
      ))}
    </Apps>
    <Tray>
      <TrayIcons />
      <TraySystem>
        <Icon><path d="M1 9c6-7 16-7 22 0M5 13c4-5 10-5 14 0M8 17c2-3 6-3 8 0" /><circle cx="12" cy="20" r="1" fill="currentColor" /></Icon>
        <Icon><path d="M1 9h4l6-5v16l-6-5H1zM14 9c2 2 2 4 0 6M17 6c4 4 4 8 0 12M20 3c5 6 5 12 0 18" /></Icon>
        <Icon size={30} h={24} box="0 0 30 24"><rect x="4" y="7" width="15" height="12" fill="#a2d69a" stroke="none" /><rect x="1" y="4" width="25" height="17" rx="5" /><path d="M28 9v7" /><path d="M15 0l-6 10h5l-2 6 7-9h-5z" fill="#fff" stroke="#3a1a1b" strokeWidth="1" /></Icon>
      </TraySystem>
      <Clock>23:58<br />2026/2/11</Clock>
    </Tray>
  </TaskBar>
);

const App = () => {
  return (
    <Page>
      <GlobalStyle />
      <Header />
      <Body>
        <Canvas>
          <ChartCard>
            <h2>季节分布</h2>
            <SeasonChart />
          </ChartCard>
          <Metrics>
            {metrics.map(([city, count]) => (
              <MetricCard key={city}>
                <h2>{city}</h2>
                <p>{count}</p>
              </MetricCard>
            ))}
            <Query />
          </Metrics>
          <ChartCard>
            <h2>收录数量前十榜单</h2>
            <RankChart />
          </ChartCard>
          <ChartCard $active>
            <h2>出现最多的汉字</h2>
            <WordCloud />
          </ChartCard>
        </Canvas>
        <StylePanel />
        <DataPanel />
      </Body>
      <Footer />
    </Page>
  );
};

export default App;
